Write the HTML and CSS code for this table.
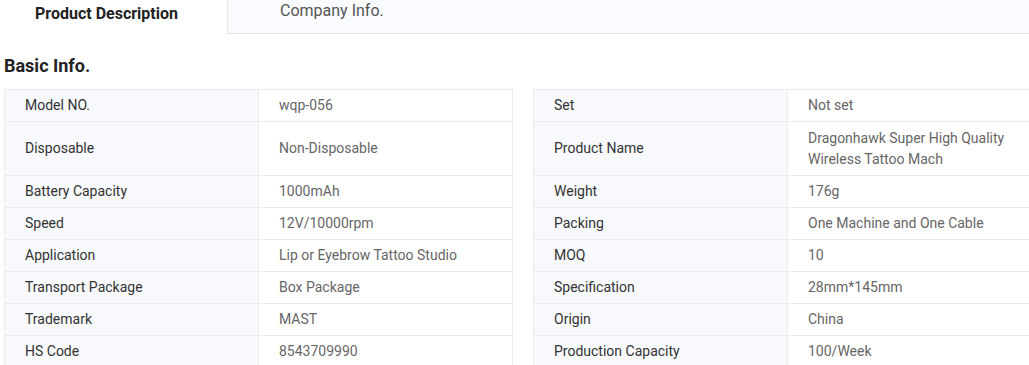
FILE: index.html
```html
<!DOCTYPE html>
<html>
<head>
<meta charset="utf-8">
<link rel="stylesheet" href="styles.css">
</head>
<body>
<div class="page">
  <div class="tabs">
    <div class="tab tab-active">Product Description</div>
    <div class="tab tab-other">Company Info.</div>
  </div>
  <h2 class="heading">Basic Info.</h2>
  <div class="tables">
    <table class="info">
      <tr><td class="lbl">Model NO.</td><td class="val">wqp-056</td></tr>
      <tr class="tall"><td class="lbl">Disposable</td><td class="val">Non-Disposable</td></tr>
      <tr><td class="lbl">Battery Capacity</td><td class="val">1000mAh</td></tr>
      <tr><td class="lbl">Speed</td><td class="val">12V/10000rpm</td></tr>
      <tr><td class="lbl">Application</td><td class="val">Lip or Eyebrow Tattoo Studio</td></tr>
      <tr><td class="lbl">Transport Package</td><td class="val">Box Package</td></tr>
      <tr><td class="lbl">Trademark</td><td class="val">MAST</td></tr>
      <tr><td class="lbl">HS Code</td><td class="val">8543709990</td></tr>
    </table>
    <table class="info">
      <tr><td class="lbl">Set</td><td class="val">Not set</td></tr>
      <tr class="tall"><td class="lbl">Product Name</td><td class="val">Dragonhawk Super High Quality Wireless Tattoo Mach</td></tr>
      <tr><td class="lbl">Weight</td><td class="val">176g</td></tr>
      <tr><td class="lbl">Packing</td><td class="val">One Machine and One Cable</td></tr>
      <tr><td class="lbl">MOQ</td><td class="val">10</td></tr>
      <tr><td class="lbl">Specification</td><td class="val">28mm*145mm</td></tr>
      <tr><td class="lbl">Origin</td><td class="val">China</td></tr>
      <tr><td class="lbl">Production Capacity</td><td class="val">100/Week</td></tr>
    </table>
  </div>
</div>
</body>
</html>
```

FILE: styles.css
```css
html, body {
  margin: 0;
  padding: 0;
  background: #ffffff;
  overflow: hidden;
}
.page {
  width: 1060px;
  font-family: Roboto, "Liberation Sans", Arial, sans-serif;
}
.tabs {
  display: flex;
  height: 34px;
}
.tab {
  box-sizing: border-box;
  height: 34px;
}
.tab-active {
  width: 227px;
  background: #ffffff;
  font-weight: 700;
  font-size: 16px;
  color: #222222;
  text-align: center;
  padding-top: 4px;
  padding-right: 14px;
  line-height: 20px;
}
.tab-other {
  flex: 1;
  background: #f9fbfe;
  border-left: 1px solid #e6e9ee;
  border-bottom: 1px solid #dfe4ea;
  font-size: 16px;
  color: #555555;
  padding-left: 52px;
  line-height: 22px;
}
.heading {
  margin: 20px 0 0 4px;
  font-size: 18px;
  font-weight: 700;
  color: #222222;
  line-height: 24px;
  height: 35px;
}
.tables {
  display: flex;
  gap: 20px;
  padding-left: 4px;
}
.info {
  border-collapse: collapse;
  width: 509px;
  table-layout: fixed;
  font-size: 14px;
  line-height: 21px;
}
.info td {
  border: 1px solid #e9ebef;
  padding: 5px 20px;
  vertical-align: middle;
}
.lbl {
  width: 254px;
  box-sizing: border-box;
  background: #f8f9fc;
  color: #333333;
}
.val {
  color: #666666;
  background: #ffffff;
}
.info tr {
  height: 32px;
}
.info tr.tall {
  height: 54px;
}
```
